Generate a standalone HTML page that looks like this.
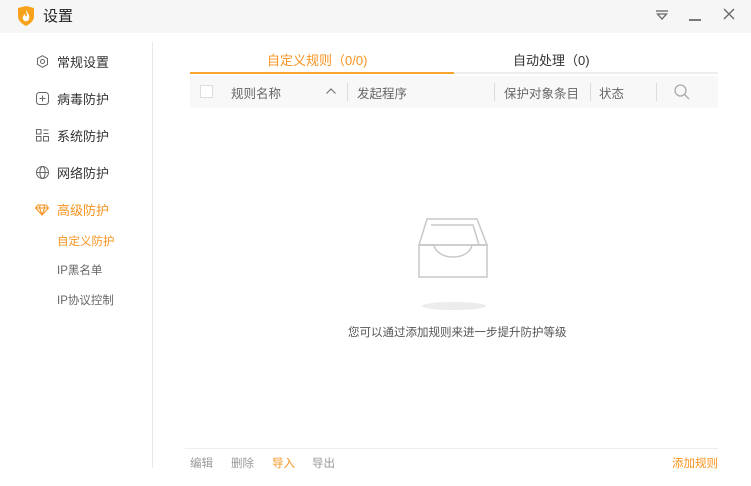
<!DOCTYPE html>
<html><head><meta charset="utf-8"><style>
*{margin:0;padding:0;box-sizing:border-box}
body{width:751px;height:486px;background:#fff;font-family:"Liberation Sans","Noto Sans CJK SC",sans-serif;position:relative;overflow:hidden;color:#333}
.a{position:absolute;white-space:nowrap}
.nav{font-size:13px;color:#333}
.sub{font-size:11.5px;color:#666}
.h{font-size:12.5px;color:#666}
.f{font-size:11.5px;color:#999}
.a.or{color:#f7931e}
</style></head><body>
<div class="a" style="left:0;top:0;width:751px;height:33px;background:#f6f6f6"></div>
<svg class="a" style="left:16px;top:5px" width="20" height="22" viewBox="0 0 20 22"><path d="M2 3 L10 1 L18 3 L18 11 C18 16 14 19 10 21 C6 19 2 16 2 11Z" fill="#f7a21b"/><path d="M10 5 C12 9 14 10 13 14 C12 17 8 17 7 14 C6 12 8 10 9 9 C9 11 10 12 11 11 C11 9 10 7 10 5Z" fill="#fff"/></svg>
<div class="a" style="left:43px;top:5px;font-size:15px;color:#222">设置</div>
<svg class="a" style="left:655px;top:9px" width="14" height="12"><path d="M1 2H13" stroke="#666" stroke-width="1.3"/><path d="M2.5 5L7 10L11.5 5Z" fill="none" stroke="#666" stroke-width="1.3"/></svg>
<div class="a" style="left:689px;top:19px;width:12px;height:1.5px;background:#777"></div>
<svg class="a" style="left:723px;top:8px" width="12" height="12"><path d="M1 1L11 11M11 1L1 11" stroke="#666" stroke-width="1.3"/></svg>

<div class="a" style="left:152px;top:42px;width:1px;height:426px;background:#e8e8e8"></div>

<svg class="a" style="left:36px;top:55px" width="13" height="13" viewBox="0 0 13 13"><circle cx="6.5" cy="6.5" r="2" fill="none" stroke="#666"/><path d="M6.5 .7L11.5 3.6V9.4L6.5 12.3L1.5 9.4V3.6Z" fill="none" stroke="#666"/></svg>
<div class="a nav" style="left:57px;top:52px">常规设置</div>
<svg class="a" style="left:36px;top:92px" width="13" height="13"><rect x=".5" y=".5" width="12" height="12" rx="3" fill="none" stroke="#666"/><path d="M6.5 3.5V9.5M3.5 6.5H9.5" stroke="#666"/></svg>
<div class="a nav" style="left:57px;top:89px">病毒防护</div>
<svg class="a" style="left:36px;top:129px" width="13" height="13"><rect x=".5" y=".5" width="4.5" height="4.5" fill="none" stroke="#666"/><rect x=".5" y="7.5" width="4.5" height="4.5" fill="none" stroke="#666"/><rect x="7.5" y="7.5" width="5" height="4.5" fill="none" stroke="#666"/><path d="M7.5 1H12.5M7.5 4.5H12.5" stroke="#666"/></svg>
<div class="a nav" style="left:57px;top:126px">系统防护</div>
<svg class="a" style="left:36px;top:166px" width="13" height="13"><circle cx="6.5" cy="6.5" r="6" fill="none" stroke="#666"/><ellipse cx="6.5" cy="6.5" rx="2.6" ry="6" fill="none" stroke="#666"/><path d="M.5 6.5H12.5" stroke="#666"/></svg>
<div class="a nav" style="left:57px;top:163px">网络防护</div>
<svg class="a" style="left:35px;top:204px" width="14" height="12"><path d="M3 1H11L13.5 4L7 11L.5 4Z M.5 4H13.5 M5 1L4.5 4L7 11L9.5 4L9 1" fill="none" stroke="#f7931e" stroke-width="1.1"/></svg>
<div class="a nav or" style="left:57px;top:200px">高级防护</div>
<div class="a sub or" style="left:57px;top:233px">自定义防护</div>
<div class="a sub" style="left:57px;top:262px">IP黑名单</div>
<div class="a sub" style="left:57px;top:292px">IP协议控制</div>

<div class="a or" style="left:267px;top:50px;font-size:13px">自定义规则（0/0)</div>
<div class="a" style="left:513px;top:50px;font-size:13px;color:#333">自动处理（0)</div>
<div class="a" style="left:190px;top:72px;width:528px;height:2px;background:#eee"></div>
<div class="a" style="left:190px;top:72px;width:264px;height:2px;background:#f7a531"></div>
<div class="a" style="left:190px;top:76px;width:528px;height:32px;background:#f8f8f8"></div>
<div class="a" style="left:200px;top:85px;width:13px;height:13px;border:1px solid #ddd;background:#fff"></div>
<div class="a h" style="left:231px;top:83px">规则名称</div>
<svg class="a" style="left:325px;top:87px" width="12" height="8"><path d="M1.5 6.5L6 2L10.5 6.5" fill="none" stroke="#777" stroke-width="1.2"/></svg>
<div class="a" style="left:347px;top:83px;width:1px;height:18px;background:#ddd"></div>
<div class="a h" style="left:357px;top:83px">发起程序</div>
<div class="a" style="left:494px;top:83px;width:1px;height:18px;background:#ddd"></div>
<div class="a h" style="left:504px;top:83px">保护对象条目</div>
<div class="a" style="left:590px;top:83px;width:1px;height:18px;background:#ddd"></div>
<div class="a h" style="left:599px;top:83px">状态</div>
<div class="a" style="left:656px;top:83px;width:1px;height:18px;background:#ddd"></div>
<svg class="a" style="left:674px;top:84px" width="16" height="16"><circle cx="6.5" cy="6.5" r="5.5" fill="none" stroke="#aaa" stroke-width="1.3"/><path d="M10.5 10.5L15 15" stroke="#aaa" stroke-width="1.3"/></svg>

<svg class="a" style="left:415px;top:213px" width="80" height="100"><g fill="none" stroke="#c8c8c8" stroke-width="1.5"><path d="M12 6H62L72 32H4Z"/><path d="M16 12H58L64 32"/><path d="M4 32H72V64H4Z"/><path d="M4 32H19C22 48 54 48 57 32H72"/></g><ellipse cx="39" cy="93" rx="32" ry="4" fill="#ececec"/></svg>
<div class="a" style="left:348px;top:324px;font-size:11.5px;color:#555">您可以通过添加规则来进一步提升防护等级</div>

<div class="a" style="left:185px;top:448px;width:533px;height:1px;background:#eee"></div>
<div class="a f" style="left:190px;top:455px">编辑</div>
<div class="a f" style="left:231px;top:455px">删除</div>
<div class="a f or" style="left:272px;top:455px">导入</div>
<div class="a f" style="left:312px;top:455px">导出</div>
<div class="a f or" style="left:672px;top:455px">添加规则</div>
</body></html>
